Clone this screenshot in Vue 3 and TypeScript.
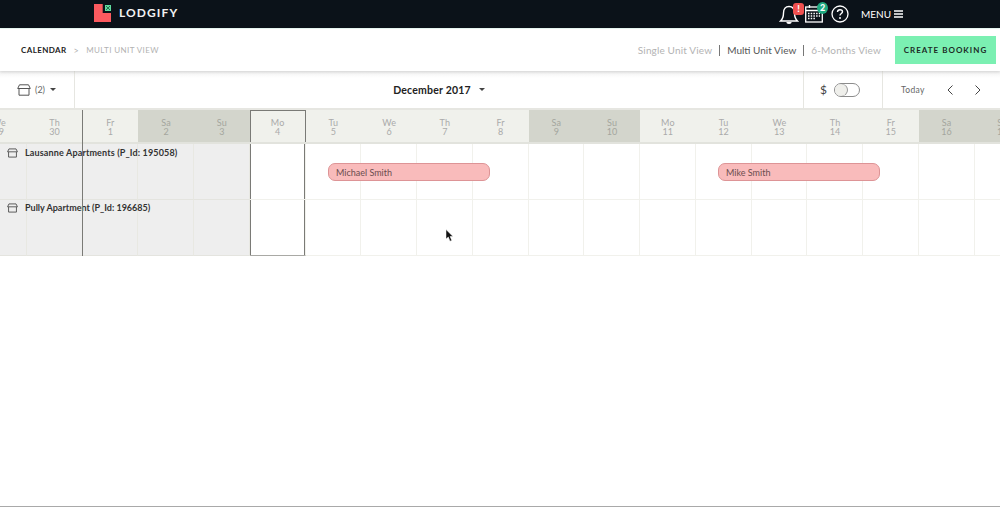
<template>
  <div class="page">
    <header class="topbar">
      <div class="brand">
        <svg class="brand__logo" width="17" height="18" viewBox="0 0 17 18">
          <path d="M0 0H8.700V9H17V18H0Z" fill="#fb5a5f" />
          <rect x="11" y="1" width="6" height="6" fill="#5fdc9f" />
          <path d="M12 2L16 6M16 2L12 6" stroke="#12392f" stroke-width="0.700" />
        </svg>
        <span class="brand__name">LODGIFY</span>
      </div>
      <div class="topbar__actions">
        <span class="icon-wrap icon-wrap--bell">
          <svg width="20" height="22" viewBox="0 0 20 22" fill="none" stroke="#fff" stroke-width="1.400">
            <path d="M1.500 18C3.800 16 4.500 13.500 4.500 10C4.500 6 6.500 3.500 10 3.500C13.500 3.500 15.500 6 15.500 10C15.500 13.500 16.200 16 18.500 18Z" />
            <path d="M8 19C8 20.800 12 20.800 12 19" fill="#fff" />
          </svg>
          <span class="badge badge--red">!</span>
        </span>
        <span class="icon-wrap icon-wrap--cal">
          <svg width="18" height="20" viewBox="0 0 18 20" fill="none" stroke="#fff" stroke-width="1.300">
            <rect x="0.700" y="3" width="16.600" height="15" />
            <path d="M1 6.500H17M4.500 1V4M13.500 1V4" />
            <path d="M3 9.500H15M3 12H15M3 14.500H11" stroke-width="1.500" stroke-dasharray="1.500 1.200" />
          </svg>
          <span class="badge badge--green">2</span>
        </span>
        <svg class="help" width="18" height="18" viewBox="0 0 18 18" fill="none">
          <circle cx="9" cy="9" r="8" stroke="#fff" stroke-width="1.300" />
          <path d="M6.500 7C6.500 5.400 7.700 4.700 9 4.700C10.500 4.700 11.500 5.600 11.500 6.800C11.500 8.500 9 8.500 9 10.500" stroke="#fff" stroke-width="1.400" />
          <circle cx="9" cy="13" r="1" fill="#fff" />
        </svg>
        <span class="menu">MENU
          <svg width="9" height="8" viewBox="0 0 9 8"><path d="M0 1H9M0 4H9M0 7H9" stroke="#fff" stroke-width="1.400" /></svg>
        </span>
      </div>
    </header>

    <section class="subbar">
      <div class="crumbs">
        <span class="crumbs__current">CALENDAR</span>
        <span class="crumbs__sep">&gt;</span>
        <span class="crumbs__rest">MULTI UNIT VIEW</span>
      </div>
      <div class="subbar__right">
        <nav class="views">
          <span>Single Unit View</span>
          <i></i>
          <span class="is-active">Multi Unit View</span>
          <i></i>
          <span>6-Months View</span>
        </nav>
        <button class="create" type="button">CREATE BOOKING</button>
      </div>
    </section>

    <section class="toolbar">
      <div class="toolbar__filter">
        <svg class="box-icon" width="14" height="12" viewBox="0 0 14 12" fill="none" stroke="#555" stroke-width="1" stroke-linejoin="round">
          <path d="M2.500 0.800H11.500L13.300 4.500H0.700ZM2 4.500V11.200H12V4.500" />
        </svg>
        <span class="filter-count">(2)</span>
        <span class="caret"></span>
      </div>
      <div class="toolbar__month">
        <span>December 2017</span>
        <span class="caret caret--month"></span>
      </div>
      <div class="toolbar__price">
        <span class="dollar">$</span>
        <span class="switch"><span></span></span>
      </div>
      <div class="toolbar__nav">
        <span class="today">Today</span>
        <svg width="6" height="10" viewBox="0 0 6 10" fill="none" stroke="#444" stroke-width="1"><path d="M5.500 0.500L1 5L5.500 9.500" /></svg>
        <svg width="6" height="10" viewBox="0 0 6 10" fill="none" stroke="#444" stroke-width="1"><path d="M0.500 0.500L5 5L0.500 9.500" /></svg>
      </div>
    </section>

    <section class="calendar">
      <div class="grid">
        <div
          v-for="day in days"
          :key="day.num"
          :class="['head', { 'is-weekend': day.weekend, 'is-today': day.num === 4 }]"
        >
          <span>{{ day.name }}</span>
          <span>{{ day.num }}</span>
        </div>
        <template v-for="row in 2" :key="row">
          <div
            v-for="day in days"
            :key="day.num"
            :class="['cell', { 'is-past': day.past, 'is-today': day.num === 4, 'is-last': row === 2 }]"
          ></div>
        </template>
      </div>

      <div class="unit unit--first">
        <svg width="11" height="10" viewBox="0 0 14 12" fill="none" stroke="#555" stroke-width="1.200" stroke-linejoin="round">
          <path d="M2.500 0.800H11.500L13.300 4.500H0.700ZM2 4.500V11.200H12V4.500" />
        </svg>
        <span>Lausanne Apartments (P_Id: 195058)</span>
      </div>
      <div class="unit unit--second">
        <svg width="11" height="10" viewBox="0 0 14 12" fill="none" stroke="#555" stroke-width="1.200" stroke-linejoin="round">
          <path d="M2.500 0.800H11.500L13.300 4.500H0.700ZM2 4.500V11.200H12V4.500" />
        </svg>
        <span>Pully Apartment (P_Id: 196685)</span>
      </div>

      <div class="booking booking--michael">Michael Smith</div>
      <div class="booking booking--mike">Mike Smith</div>
      <div class="month-line"></div>

      <svg class="cursor" width="9" height="13" viewBox="0 0 9 13">
        <path d="M1 0.500V10L3.300 8L5 12.200L6.800 11.400L5.100 7.500H8Z" fill="#111" stroke="#fff" stroke-width="0.500" />
      </svg>
    </section>
  </div>
</template>

<script setup lang="ts">
interface Day {
  name: string
  num: number
  weekend: boolean
  past: boolean
}

const names = ['We', 'Th', 'Fr', 'Sa', 'Su', 'Mo', 'Tu']

// grid starts on Wed 29 Nov, the view is scrolled a little to the left
const days: Day[] = Array.from({ length: 19 }, (_, i) => {
  const name = names[i % 7]
  const num = i < 2 ? 29 + i : i - 1
  return { name, num, weekend: name === 'Sa' || name === 'Su', past: i < 5 }
})
</script>

<style>
html,
body {
  margin: 0;
  background: #fff;
}
</style>

<style scoped>
.page {
  height: 507px;
  overflow: hidden;
  box-sizing: border-box;
  border-bottom: 1px solid #a9a9a9;
  font-family: Lato, "Liberation Sans", sans-serif;
  color: #333;
}

.topbar {
  height: 28px;
  background: #0b1219;
  display: flex;
  justify-content: space-between;
  padding: 0 0 0 94px;
  border-bottom: 1px solid #eafaf5;
}

.brand {
  display: flex;
  align-items: flex-start;
  gap: 8px;
  padding-top: 4px;
}

.brand__name {
  color: #f2f2f2;
  font-size: 12px;
  font-weight: 700;
  letter-spacing: 1.100px;
  line-height: 18px;
}

.topbar__actions {
  display: flex;
  align-items: center;
  width: 222px;
  box-sizing: border-box;
  padding-left: 1px;
}

.icon-wrap {
  position: relative;
  display: block;
  height: 22px;
  width: 26px;
}

.icon-wrap--cal {
  padding-top: 2px;
}

.badge {
  position: absolute;
  width: 11px;
  height: 12px;
  border-radius: 3px;
  top: 0;
  left: 14px;
  color: #fff;
  font-size: 9px;
  font-weight: 900;
  line-height: 12px;
  text-align: center;
}

.badge--red {
  background: #f0504f;
}

.badge--green {
  background: #20a980;
  border-radius: 50%;
  left: 12px;
}

.menu {
  margin-left: 12px;
  color: #fff;
  font-size: 10px;
  line-height: 14px;
  display: flex;
  gap: 3px;
  align-items: center;
}

.subbar {
  height: 42px;
  display: flex;
  justify-content: space-between;
  align-items: center;
  padding: 0 4px 0 21px;
  box-shadow: 0 1px 3px rgba(0, 0, 0, 0.14);
  position: relative;
}

.crumbs {
  display: flex;
  gap: 7px;
  font-size: 8px;
  letter-spacing: 0.4px;
  align-items: center;
}

.crumbs__current {
  color: #222;
  font-weight: 700;
}

.crumbs__sep,
.crumbs__rest {
  color: #b2b2b2;
}

.crumbs__sep {
  font-size: 9px;
}

.subbar__right {
  display: flex;
  align-items: center;
  gap: 14px;
}

.views {
  display: flex;
  align-items: center;
  gap: 7px;
  font-size: 10px;
  letter-spacing: 0.150px;
  color: #b3b3b3;
}

.views i {
  width: 1px;
  height: 11px;
  background: #777;
}

.views .is-active {
  color: #555;
  letter-spacing: 0;
}

.create {
  width: 101px;
  height: 28px;
  border: 0;
  padding: 0;
  background: #7bf0b2;
  color: #1c2a25;
  font-family: inherit;
  font-size: 8px;
  font-weight: 700;
  letter-spacing: 1px;
}

.toolbar {
  height: 39px;
  display: flex;
  border-bottom: 2px solid #e6e6e1;
  box-sizing: border-box;
  background: linear-gradient(#f2f2f2, #fff 7px);
}

.toolbar > div {
  display: flex;
  align-items: center;
  box-sizing: border-box;
}

.toolbar__filter {
  width: 75px;
  padding-left: 17px;
  border-right: 1px solid #e6e6e1;
}

.filter-count {
  font-size: 9px;
  color: #666;
  margin-left: 4px;
}

.caret {
  width: 0;
  height: 0;
  border-left: 3px solid transparent;
  border-right: 3px solid transparent;
  border-top: 3px solid #444;
  margin-left: 5px;
}

.toolbar__month {
  flex: 1;
  justify-content: center;
  font-size: 10.500px;
  font-weight: 700;
  letter-spacing: 0.2px;
  color: #222;
}

.caret--month {
  margin-left: 8px;
}

.toolbar__price {
  width: 80px;
  justify-content: center;
  gap: 7px;
  padding-right: 6px;
  border-left: 1px solid #e6e6e1;
  border-right: 1px solid #e6e6e1;
}

.dollar {
  font-size: 12px;
  color: #444;
}

.switch {
  display: block;
  box-sizing: border-box;
  width: 26px;
  height: 14px;
  border: 1px solid #8c8c8c;
  border-radius: 7px;
  background: #fff;
}

.switch span {
  display: block;
  width: 12px;
  height: 12px;
  border-radius: 50%;
  background: #efefeb;
  box-shadow: 1px 0 0 #999;
}

.toolbar__nav {
  flex: 0 0 117px;
  padding-left: 18px;
  gap: 22px;
}

.today {
  font-size: 8.500px;
  letter-spacing: 0.3px;
  color: #666;
}

.calendar {
  position: relative;
}

.grid {
  display: grid;
  grid-template-columns: repeat(19, 55.750px);
  grid-template-rows: 34px 56px 56px;
  margin-left: -29px;
}

.head {
  background: #f0f1ec;
  border-bottom: 2px solid #e2e3dd;
  box-sizing: border-box;
  display: flex;
  flex-direction: column;
  align-items: center;
  padding-top: 8px;
  font-size: 9px;
  line-height: 9px;
  letter-spacing: 0.2px;
  color: #aaa;
}

.head.is-weekend {
  background: #d3d5cc;
  color: #a4a69e;
}

.head.is-today {
  box-shadow: inset 1px 1px 0 #7a7a76, inset -1px 0 0 #7a7a76;
}

.cell {
  box-sizing: border-box;
  border-right: 1px solid #f1f1ec;
  border-bottom: 1px solid #f1f1ec;
}

.cell.is-past {
  background: #eeeeee;
  border-right-color: #e8e8e2;
  border-bottom-color: #e4e4df;
}

.cell.is-today {
  box-shadow: inset 1px 0 0 #7a7a76, inset -1px 0 0 #7a7a76;
}

.cell.is-today.is-last {
  border-bottom-color: #a9a9a5;
}

.unit {
  position: absolute;
  left: 7px;
  display: flex;
  align-items: center;
  gap: 7px;
  font-size: 9px;
  font-weight: 700;
  letter-spacing: 0.150px;
  color: #333;
  line-height: 11px;
}

.unit--first {
  top: 37px;
}

.unit--second {
  top: 92px;
  letter-spacing: 0;
}

.booking {
  position: absolute;
  top: 53px;
  width: 162px;
  height: 18px;
  box-sizing: border-box;
  border: 1px solid #dd9496;
  border-radius: 7px;
  background: #f9bbbb;
  padding-left: 7px;
  font-size: 9px;
  line-height: 17px;
  color: #6b4d4f;
}

.booking--michael {
  left: 328px;
}

.booking--mike {
  left: 718px;
}

.month-line {
  position: absolute;
  left: 82px;
  top: 0;
  width: 1px;
  height: 146px;
  background: #7a7a76;
}

.cursor {
  position: absolute;
  left: 445px;
  top: 119px;
}
</style>
